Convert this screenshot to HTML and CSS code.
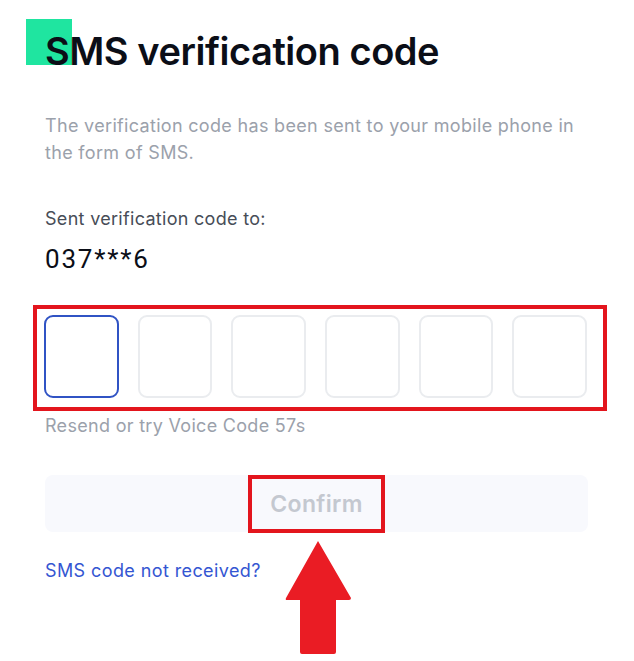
FILE: index.html
```html
<!DOCTYPE html>
<html lang="en">
<head>
<meta charset="utf-8">
<title>SMS verification code</title>
<link rel="stylesheet" href="styles.css">
</head>
<body>
<main class="page">
  <div class="mark"></div>
  <h1 class="title">SMS verification code</h1>
  <p class="desc">The verification code has been sent to your mobile phone in the form of SMS.</p>
  <p class="sent">Sent verification code to:</p>
  <p class="phone">037***6</p>
  <div class="otp-wrap">
    <div class="otp">
      <div class="cell active"></div>
      <div class="cell"></div>
      <div class="cell"></div>
      <div class="cell"></div>
      <div class="cell"></div>
      <div class="cell"></div>
    </div>
  </div>
  <p class="resend">Resend or try Voice Code 57s</p>
  <div class="btn"><span class="btn-label">Confirm</span></div>
  <a class="link" href="#">SMS code not received?</a>
  <svg class="arrow" width="67" height="115" viewBox="0 0 67 115">
    <path d="M33 1 L66 58 Q66 60 64 60 L51 60 L51 112 Q51 114 49 114 L17 114 Q15 114 15 112 L15 60 L2 60 Q0 60 1 58 Z" fill="#ea1c24"/>
  </svg>
</main>
</body>
</html>
```

FILE: styles.css
```css
html, body {
  margin: 0;
  padding: 0;
  background: #ffffff;
}
.page {
  position: relative;
  width: 634px;
  height: 661px;
  box-sizing: border-box;
  padding: 28px 0 0 45px;
  font-family: Inter, "Noto Sans", sans-serif;
  display: flex;
  flex-direction: column;
  align-items: flex-start;
  overflow: hidden;
}
.mark {
  position: absolute;
  left: 26px;
  top: 19px;
  width: 46px;
  height: 46px;
  background: #1fe5a0;
}
.title {
  position: relative;
  margin: 0;
  font-size: 38px;
  line-height: 46px;
  font-weight: 600;
  color: #0b0e17;
  letter-spacing: -0.45px;
}
.desc {
  margin: 38px 0 0;
  width: 540px;
  font-size: 18px;
  line-height: 27px;
  color: #9ba1ab;
  letter-spacing: 0.32px;
}
.sent {
  margin: 39px 0 0;
  font-size: 18px;
  line-height: 27px;
  color: #474d57;
  letter-spacing: 0.3px;
}
.phone {
  margin: 12px 0 0;
  font-family: Roboto, "Liberation Sans", sans-serif;
  font-size: 26px;
  line-height: 30px;
  color: #0b0e17;
  letter-spacing: 1.8px;
}
.otp-wrap {
  margin: 31px 0 0 -12px;
  padding: 6px 16px 9px 7px;
  border: 4px solid #e3151d;
}
.otp {
  display: flex;
  gap: 19px;
  width: 543px;
}
.cell {
  width: 75px;
  height: 83px;
  box-sizing: border-box;
  border: 2px solid #eaecef;
  border-radius: 9px;
}
.cell.active {
  border-color: #3053c4;
}
.resend {
  margin: 1px 0 0;
  font-size: 18px;
  line-height: 27px;
  color: #9ba1ab;
  letter-spacing: 0.3px;
}
.btn {
  margin-top: 36px;
  width: 543px;
  height: 57px;
  border-radius: 8px;
  background: #f8f9fd;
  display: flex;
  justify-content: center;
  align-items: center;
}
.btn-label {
  border: 4px solid #e3151d;
  padding: 10px 18px;
  font-size: 23px;
  line-height: 30px;
  font-weight: 600;
  color: #c4c8d0;
  letter-spacing: 0.3px;
}
.link {
  margin-top: 25px;
  font-size: 18px;
  line-height: 27px;
  color: #3456d2;
  text-decoration: none;
  letter-spacing: 0.4px;
}
.arrow {
  position: absolute;
  left: 285px;
  top: 540px;
}
```
